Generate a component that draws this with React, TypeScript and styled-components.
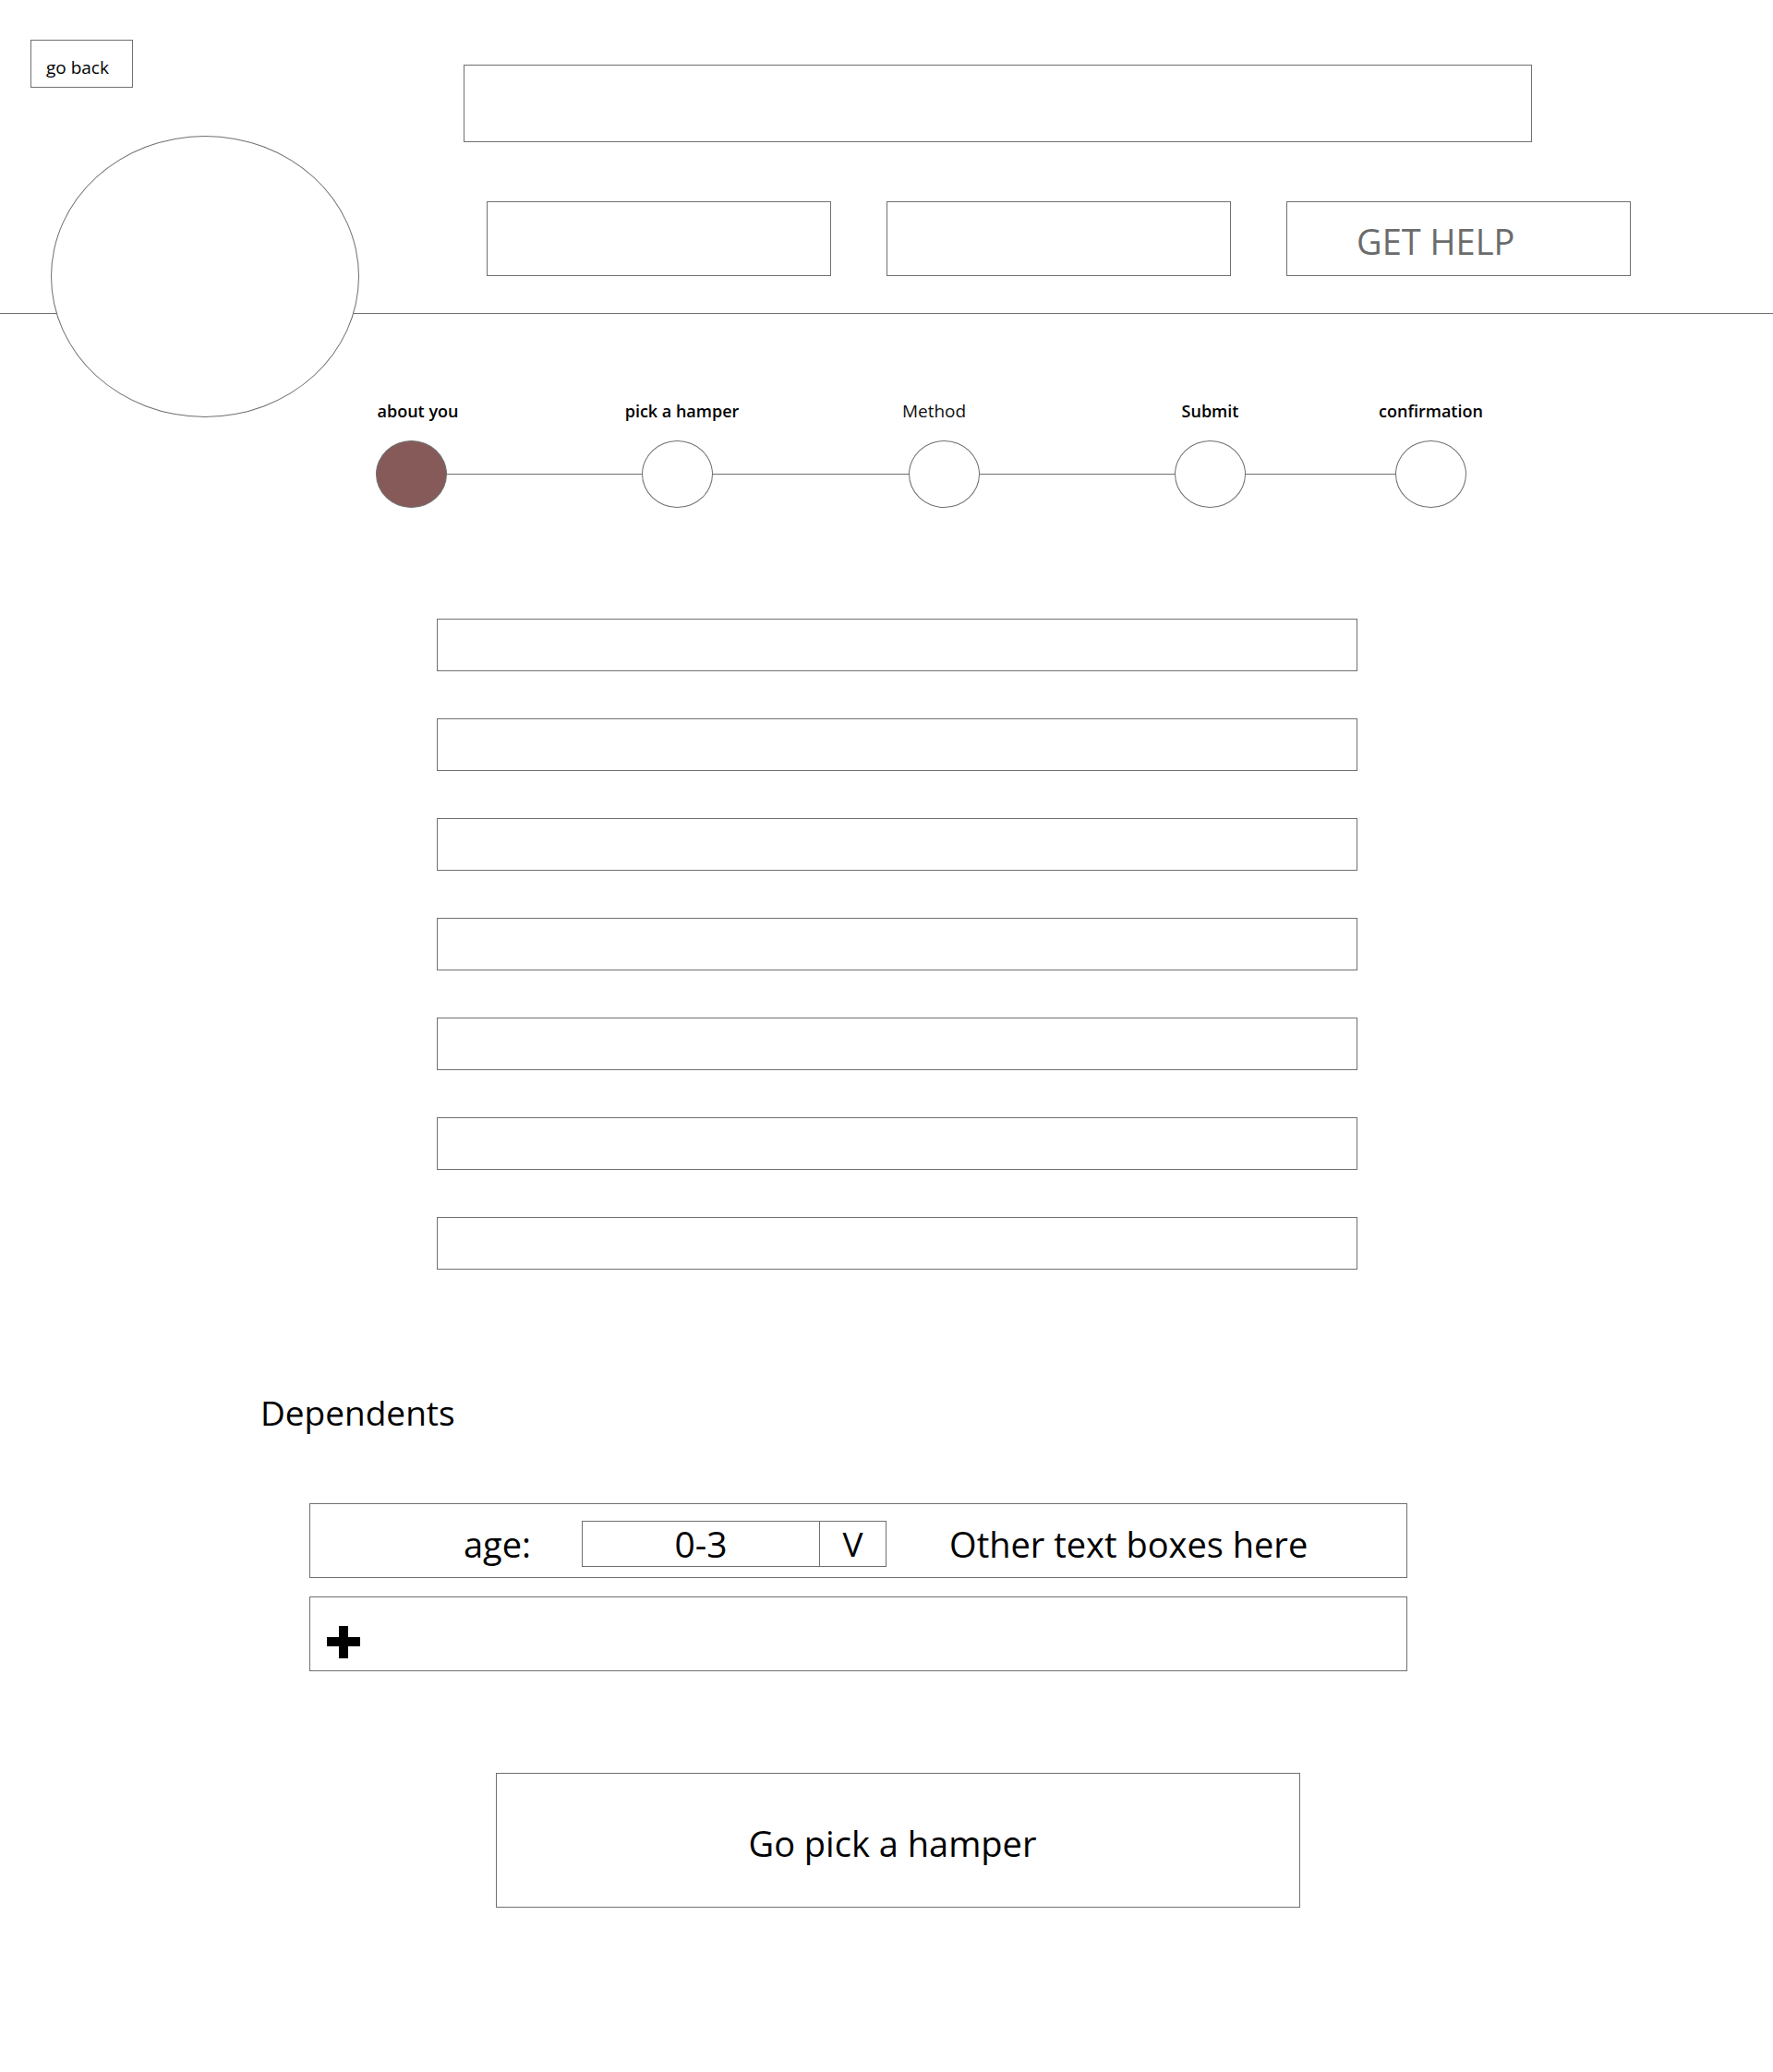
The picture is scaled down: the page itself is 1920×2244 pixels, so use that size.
import React from 'react';
import styled, { createGlobalStyle } from 'styled-components';

const LINE = '#707070';

const GlobalStyle = createGlobalStyle`
  * {
    box-sizing: border-box;
  }
  body {
    margin: 0;
    background: #fff;
    color: #000;
    font-family: 'Open Sans', 'Noto Sans', sans-serif;
  }
`;

type Step = {
  label: string;
  active?: boolean;
  strong?: boolean;
  shift?: number;
  gap?: number;
};

const steps: Step[] = [
  { label: 'about you', active: true, strong: true, shift: 7, gap: 211 },
  { label: 'pick a hamper', strong: true, shift: 5, gap: 212 },
  { label: 'Method', shift: -11, gap: 211 },
  { label: 'Submit', strong: true, gap: 162 },
  { label: 'confirmation', strong: true },
];

const PlusIcon = () => (
  <svg width="36" height="35" viewBox="0 0 36 35" aria-hidden="true">
    <rect x="0" y="12" width="36" height="10" fill="#000" />
    <rect x="13" y="0" width="10" height="35" fill="#000" />
  </svg>
);

export default function App() {
  return (
    <Page>
      <GlobalStyle />
      <Header>
        <Brand>
          <GoBack>go back</GoBack>
          <Logo />
        </Brand>
        <HeaderMain>
          <TitleBox />
          <ActionsRow>
            <ActionBox />
            <ActionBox />
            <ActionBox>GET HELP</ActionBox>
          </ActionsRow>
        </HeaderMain>
      </Header>
      <Divider />

      <Stepper>
        {steps.map((step) => (
          <React.Fragment key={step.label}>
            <StepItem>
              <StepLabel $strong={!!step.strong} $shift={step.shift || 0}>
                {step.label}
              </StepLabel>
              <StepDot $active={!!step.active} />
            </StepItem>
            {step.gap ? <Connector $width={step.gap} /> : null}
          </React.Fragment>
        ))}
      </Stepper>

      <Form>
        {Array.from({ length: 7 }).map((_, i) => (
          <Field key={i} type="text" aria-label={`field ${i + 1}`} />
        ))}
      </Form>

      <SectionTitle>Dependents</SectionTitle>
      <DependentsList>
        <DependentRow>
          <span>age:</span>
          <AgeSelect>
            <SelectValue>0-3</SelectValue>
            <SelectToggle>V</SelectToggle>
          </AgeSelect>
          <OtherText>Other text boxes here</OtherText>
        </DependentRow>
        <AddRow>
          <PlusIcon />
        </AddRow>
      </DependentsList>

      <SubmitButton>Go pick a hamper</SubmitButton>
    </Page>
  );
}

const Page = styled.div`
  width: 1920px;
  min-height: 2244px;
  padding-bottom: 40px;
`;

const Header = styled.header`
  display: flex;
  align-items: flex-start;
`;

const Brand = styled.div`
  width: 420px;
  flex: none;
  display: flex;
  flex-direction: column;
  align-items: flex-start;
`;

const GoBack = styled.button`
  display: flex;
  align-items: flex-start;
  margin: 43px 0 0 33px;
  width: 111px;
  height: 52px;
  padding: 16px 0 0 16px;
  border: 1px solid ${LINE};
  background: #fff;
  color: #000;
  font-family: inherit;
  font-size: 19px;
  line-height: 26px;
  cursor: pointer;
`;

const Logo = styled.div`
  position: relative;
  z-index: 1;
  margin: 52px 0 -113px 55px;
  width: 334px;
  height: 305px;
  border: 1px solid ${LINE};
  border-radius: 50%;
  background: #fff;
`;

const HeaderMain = styled.div`
  flex: 1;
  display: flex;
  flex-direction: column;
  align-items: flex-start;
`;

const TitleBox = styled.div`
  margin: 70px 0 0 82px;
  width: 1157px;
  height: 84px;
  border: 1px solid ${LINE};
`;

const ActionsRow = styled.div`
  display: flex;
  gap: 60px;
  margin: 64px 0 0 107px;
`;

const ActionBox = styled.button`
  display: flex;
  align-items: flex-start;
  width: 373px;
  height: 81px;
  padding: 16px 0 0 75px;
  border: 1px solid ${LINE};
  background: #fff;
  color: #6b6b6b;
  font-family: inherit;
  font-size: 38px;
  line-height: 52px;
  cursor: pointer;
`;

const Divider = styled.hr`
  margin: 0;
  height: 1px;
  border: none;
  background: ${LINE};
`;

const Stepper = styled.div`
  display: flex;
  align-items: flex-end;
  margin: 93px 0 0 407px;
`;

const StepItem = styled.div`
  display: flex;
  flex-direction: column;
  align-items: center;
  width: 77px;
  flex: none;
`;

const StepLabel = styled.span<{ $strong: boolean; $shift: number }>`
  white-space: nowrap;
  font-size: ${({ $strong }) => ($strong ? '18px' : '19px')};
  font-weight: ${({ $strong }) => ($strong ? 600 : 400)};
  line-height: 24px;
  color: ${({ $strong }) => ($strong ? '#000' : '#111')};
  ${({ $shift }) =>
    $shift >= 0 ? `margin-left: ${$shift * 2}px;` : `margin-right: ${-$shift * 2}px;`}
`;

const StepDot = styled.div<{ $active: boolean }>`
  margin-top: 20px;
  width: 77px;
  height: 73px;
  border: 1px solid ${LINE};
  border-radius: 50%;
  background: ${({ $active }) => ($active ? '#875a5a' : '#fff')};
`;

const Connector = styled.div<{ $width: number }>`
  flex: none;
  width: ${({ $width }) => $width}px;
  height: 1px;
  margin-bottom: 36px;
  background: ${LINE};
`;

const Form = styled.form`
  display: flex;
  flex-direction: column;
  gap: 51px;
  width: 997px;
  margin: 120px 0 0 473px;
`;

const Field = styled.input`
  height: 57px;
  padding: 0 14px;
  border: 1px solid ${LINE};
  border-radius: 0;
  background: #fff;
  font-family: inherit;
  font-size: 20px;
  outline: none;
`;

const SectionTitle = styled.h2`
  margin: 130px 0 0 282px;
  font-size: 37px;
  font-weight: 400;
  line-height: 50px;
`;

const DependentsList = styled.div`
  display: flex;
  flex-direction: column;
  gap: 20px;
  width: 1189px;
  margin: 73px 0 0 335px;
`;

const DependentRow = styled.div`
  display: flex;
  align-items: center;
  height: 81px;
  padding: 6px 0 0 166px;
  border: 1px solid ${LINE};
  font-size: 38px;
  line-height: 50px;
`;

const AgeSelect = styled.div`
  display: flex;
  width: 330px;
  height: 50px;
  margin-left: 55px;
  border: 1px solid ${LINE};
  font-size: 39px;
  line-height: 48px;
`;

const SelectValue = styled.span`
  flex: 1;
  text-align: center;
`;

const SelectToggle = styled.span`
  width: 72px;
  border-left: 1px solid ${LINE};
  font-size: 37px;
  text-align: center;
`;

const OtherText = styled.span`
  margin-left: 68px;
`;

const AddRow = styled.div`
  display: flex;
  align-items: flex-end;
  height: 81px;
  padding: 0 0 13px 18px;
  border: 1px solid ${LINE};
`;

const SubmitButton = styled.button`
  display: block;
  margin: 110px 0 0 537px;
  width: 871px;
  height: 146px;
  padding: 6px 12px 0 0;
  border: 1px solid ${LINE};
  background: #fff;
  color: #000;
  font-family: inherit;
  font-size: 38px;
  line-height: 50px;
  cursor: pointer;
`;
